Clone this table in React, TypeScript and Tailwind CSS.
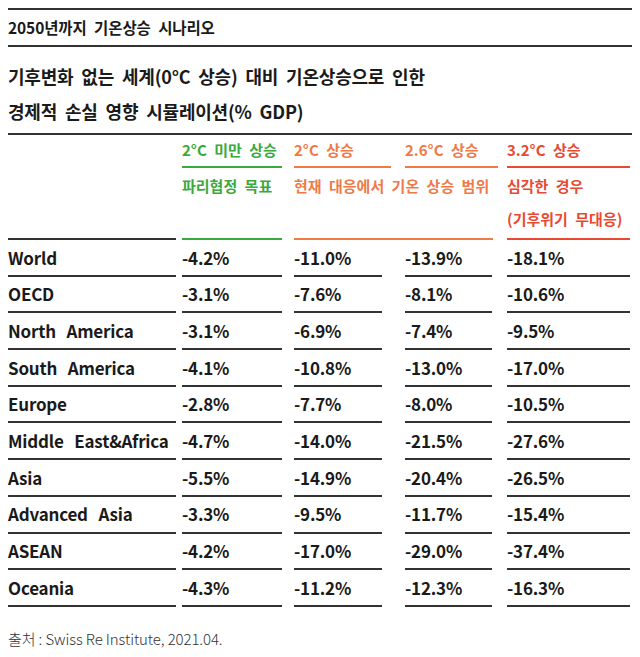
const rows: [string, string, string, string, string][] = [
  ["World", "-4.2%", "-11.0%", "-13.9%", "-18.1%"],
  ["OECD", "-3.1%", "-7.6%", "-8.1%", "-10.6%"],
  ["North America", "-3.1%", "-6.9%", "-7.4%", "-9.5%"],
  ["South America", "-4.1%", "-10.8%", "-13.0%", "-17.0%"],
  ["Europe", "-2.8%", "-7.7%", "-8.0%", "-10.5%"],
  ["Middle East&Africa", "-4.7%", "-14.0%", "-21.5%", "-27.6%"],
  ["Asia", "-5.5%", "-14.9%", "-20.4%", "-26.5%"],
  ["Advanced Asia", "-3.3%", "-9.5%", "-11.7%", "-15.4%"],
  ["ASEAN", "-4.2%", "-17.0%", "-29.0%", "-37.4%"],
  ["Oceania", "-4.3%", "-11.2%", "-12.3%", "-16.3%"],
];

const grid = "grid grid-cols-[174px_112px_111px_102px_123px]";

export default function App() {
  return (
    <div
      className="w-[640px] h-[657px] bg-white px-2 pt-2 text-[#1a1a1a] whitespace-pre"
      style={{ fontFamily: '"Noto Sans CJK KR", "Noto Sans", sans-serif' }}
    >
      {/* title */}
      <div className="border-t-2 border-b-2 border-[#333] h-[39px] flex items-center text-[15.5px] font-semibold tracking-[-0.1px] [word-spacing:4px]">
        2050년까지 기온상승 시나리오
      </div>

      {/* subtitle */}
      <div className="pt-[12px] pb-[4px] text-[18px] font-bold leading-[35px] tracking-[-0.2px] [word-spacing:4px]">
        <div>기후변화 없는 세계(0°C 상승) 대비 기온상승으로 인한</div>
        <div>경제적 손실 영향 시뮬레이션(% GDP)</div>
      </div>

      {/* header */}
      <div className="border-t-2 border-[#333]">
        <div className={`${grid} text-[15px] font-bold [word-spacing:4px]`}>
          {/* row A */}
          <div />
          <div className="w-[100px] h-[33px] flex items-center border-b-2 border-[#3aaa3c] text-[#3aaa3c]">2°C 미만 상승</div>
          <div className="w-[97px] h-[33px] flex items-center border-b-2 border-[#ef7a48] text-[#ef7a48]">2°C 상승</div>
          <div className="w-[93px] h-[33px] flex items-center border-b-2 border-[#ef7a48] text-[#ef7a48]">2.6°C 상승</div>
          <div className="w-[123px] h-[33px] flex items-center border-b-2 border-[#e84a30] text-[#e84a30]">3.2°C 상승</div>

          {/* row B */}
          <div />
          <div className="h-[36px] flex items-center text-[#3aaa3c]">파리협정 목표</div>
          <div className="col-span-2 h-[36px] flex items-center text-[#ef7a48]">현재 대응에서 기온 상승 범위</div>
          <div className="h-[36px] flex items-center text-[#e84a30]">심각한 경우</div>

          {/* row C */}
          <div className="w-[168px] h-[36px] border-b-2 border-[#333]" />
          <div className="w-[100px] h-[36px] border-b-2 border-[#3aaa3c]" />
          <div className="col-span-2 w-[199px] h-[36px] border-b-2 border-[#ef7a48]" />
          <div className="w-[123px] h-[36px] flex items-center pb-[3px] border-b-2 border-[#e84a30] text-[#e84a30]">(기후위기 무대응)</div>
        </div>

        {/* body */}
        <div className={`${grid} text-[17px] font-semibold tracking-[-0.2px]`}>
          {rows.map((r) => (
            <div key={r[0]} className="contents">
              <div className="w-[168px] h-[36.7px] flex items-center border-b-2 border-[#333] [word-spacing:7px]">{r[0]}</div>
              <div className="w-[100px] h-[36.7px] flex items-center border-b-2 border-[#333]">{r[1]}</div>
              <div className="w-[88px] h-[36.7px] flex items-center border-b-2 border-[#333]">{r[2]}</div>
              <div className="w-[87px] h-[36.7px] flex items-center border-b-2 border-[#333]">{r[3]}</div>
              <div className="w-[123px] h-[36.7px] flex items-center border-b-2 border-[#333]">{r[4]}</div>
            </div>
          ))}
        </div>
      </div>

      {/* source */}
      <div className="mt-[21px] text-[15px] font-light tracking-[-0.1px] text-[#333]">
        출처 : Swiss Re Institute, 2021.04.
      </div>
    </div>
  );
}
